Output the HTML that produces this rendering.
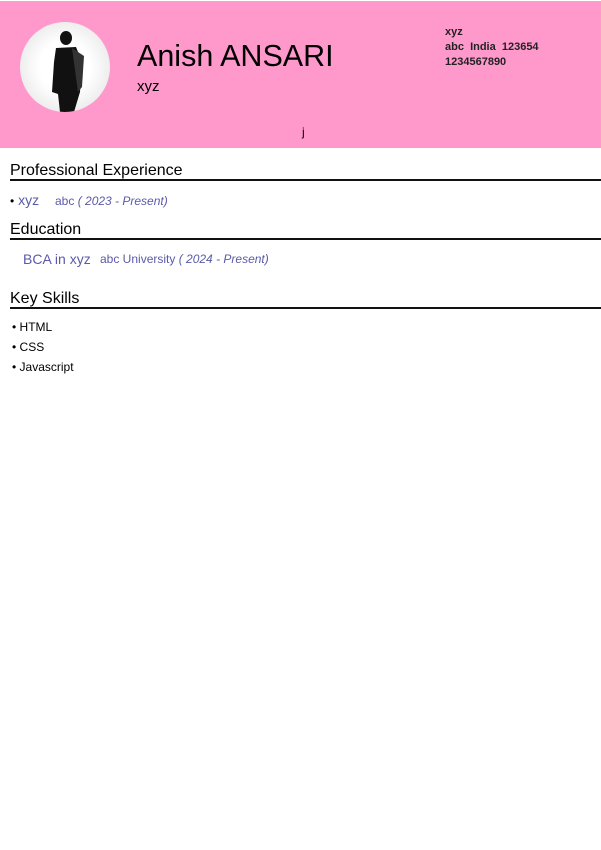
<!DOCTYPE html>
<html><head><meta charset="utf-8"><style>
body{margin:0;width:601px;height:850px;background:#fff;font-family:"Liberation Sans",Arial,sans-serif;position:relative;overflow:hidden}
.a{position:absolute;white-space:nowrap}
.hdr{position:absolute;left:0;top:1px;width:601px;height:147px;background:#ff99cc}
.circ{position:absolute;left:20px;top:22px;width:90px;height:90px;border-radius:50%;background:radial-gradient(circle at 50% 50%,#fff 40%,#ddd 100%);overflow:hidden}
.line{position:absolute;left:10px;width:591px;height:2px;background:#111}
.blue{color:#5a5aaa}
</style></head><body>
<div class="hdr"></div>
<div class="circ">
<svg width="90" height="90" viewBox="0 0 90 90">
<ellipse cx="46" cy="16" rx="6" ry="7" fill="#111"/>
<path d="M36 26 L56 25 L62 40 L60 70 L54 90 L40 90 L38 72 L32 70 L34 40 Z" fill="#111"/>
<path d="M52 26 L64 34 L62 65 L58 70 Z" fill="#333"/>
</svg>
</div>
<div class="a" style="left:137px;top:39px;font-size:30.5px;color:#000">Anish ANSARI</div>
<div class="a" style="left:137px;top:78px;font-size:15px">xyz</div>
<div class="a" style="left:445px;top:25px;font-size:11px;font-weight:bold;line-height:15px;color:#222">xyz<br>abc&nbsp; India&nbsp; 123654<br>1234567890</div>
<div class="a" style="left:302px;top:125px;font-size:12px">j</div>

<div class="a" style="left:10px;top:162px;font-size:16px">Professional Experience</div>
<div class="line" style="top:179px"></div>
<div class="a" style="left:10px;top:192px;font-size:14px"><span style="font-size:12px">•</span> <span class="blue">xyz</span></div>
<div class="a blue" style="left:55px;top:194px;font-size:12px">abc <i>( 2023 - Present)</i></div>

<div class="a" style="left:10px;top:221px;font-size:16px">Education</div>
<div class="line" style="top:238px"></div>
<div class="a blue" style="left:23px;top:251px;font-size:14px">BCA in xyz</div>
<div class="a blue" style="left:100px;top:252px;font-size:12px">abc University <i>( 2024 - Present)</i></div>

<div class="a" style="left:10px;top:290px;font-size:16px">Key Skills</div>
<div class="line" style="top:307px"></div>
<div class="a" style="left:12px;top:317px;font-size:12px;line-height:20px">• HTML<br>• CSS<br>• Javascript</div>
</body></html>
